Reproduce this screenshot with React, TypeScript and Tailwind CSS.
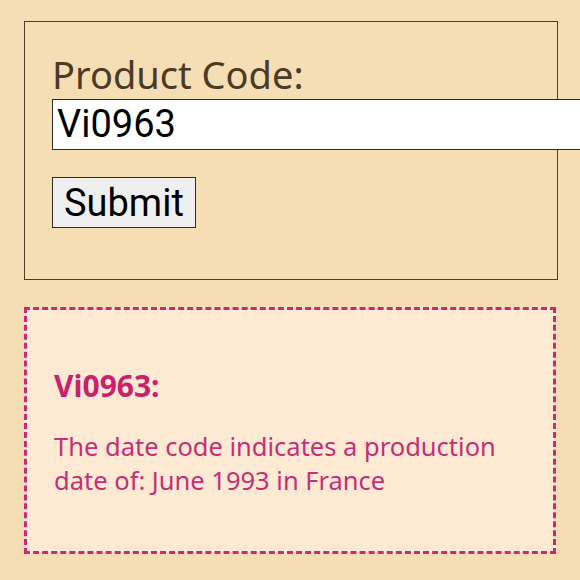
import React from "react";

export default function App() {
  return (
    <div className="w-[580px] h-[580px] overflow-hidden bg-[#f5deb3] pt-[21px] px-[24px]">
      <form
        className="border border-[#4d3d2b] h-[259px] pl-[27px] pt-[28px] w-[534px]"
        onSubmit={(e) => e.preventDefault()}
      >
        <label className="block text-[38px] leading-[49px] text-[#4b3a26] font-['Noto_Sans',sans-serif]">
          Product Code:
        </label>
        <input
          defaultValue="Vi0963"
          className="block w-[560px] h-[51px] bg-white border border-[#2b2b2b] px-[4px] text-[38px] text-black font-['Roboto',sans-serif] outline-none"
        />
        <button
          type="submit"
          className="mt-[27px] block h-[51px] px-[11px] bg-[#efefef] border border-[#2b2b2b] text-[38px] leading-none text-black font-['Roboto',sans-serif]"
        >
          Submit
        </button>
      </form>
      <div className="mt-[27px] h-[247px] border-[3px] border-dashed border-[#c92a74] bg-[#feead2] pl-[27px] pt-[56px]">
        <div className="text-[30px] font-bold leading-[40px] text-[#c8226e] font-['Noto_Sans',sans-serif]">
          Vi0963:
        </div>
        <p className="mt-[23px] w-[470px] text-[25.5px] leading-[34px] text-[#c2307a] font-['Noto_Sans',sans-serif]">
          The date code indicates a production date of: June 1993 in France
        </p>
      </div>
    </div>
  );
}
